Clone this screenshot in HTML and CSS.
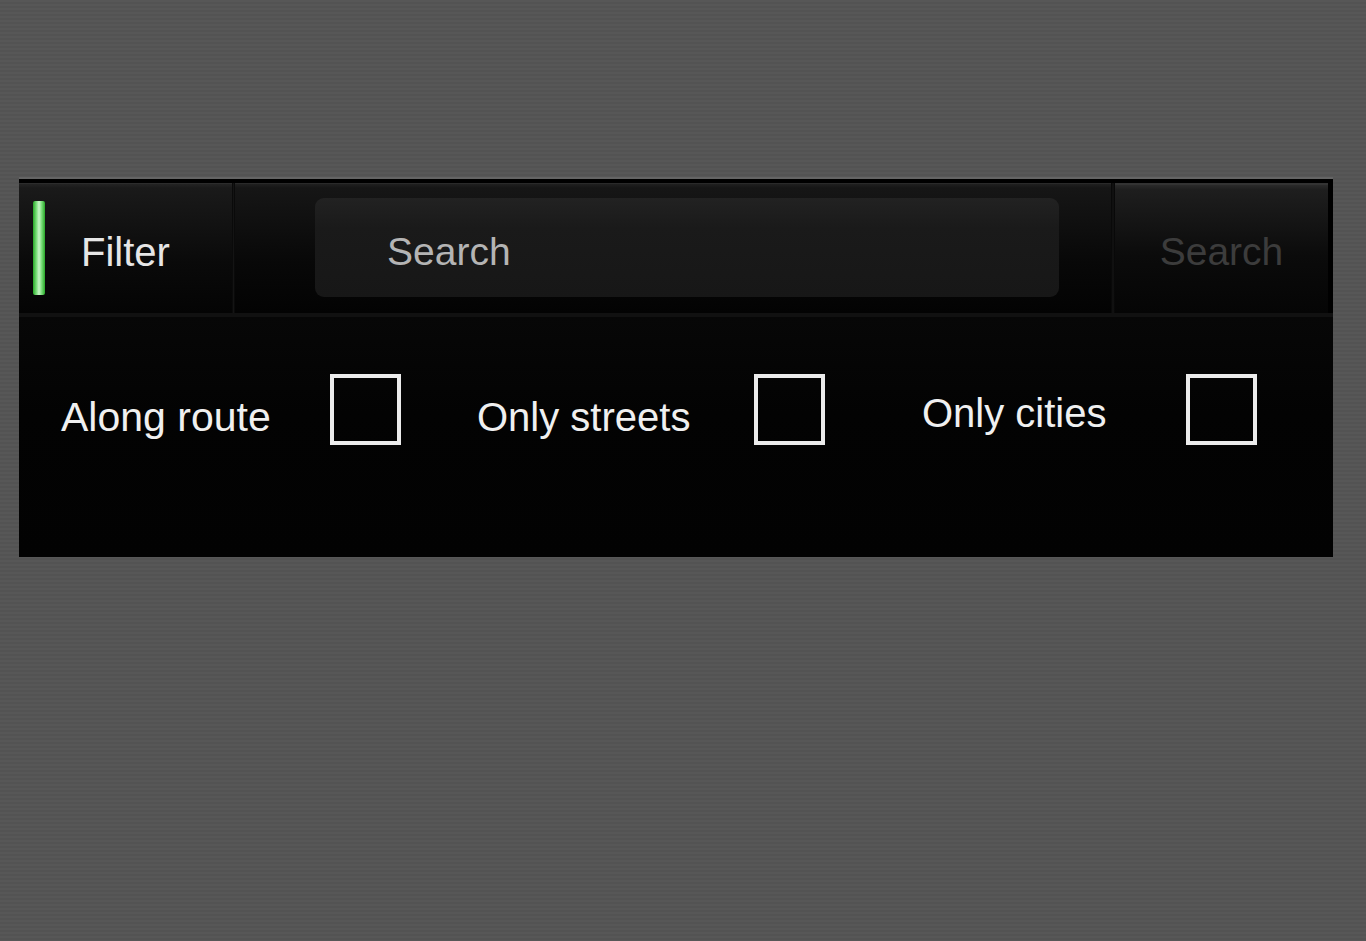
FILE: index.html
```html
<!DOCTYPE html>
<html lang="en">
<head>
    <meta charset="UTF-8">
    <meta name="viewport" content="width=device-width, initial-scale=1.0">
    <title>Search filter</title>
    <link rel="stylesheet" href="styles.css">
</head>
<body>
    <div class="panel">
        <div class="header">
            <div class="filter-cell">
                <span class="indicator"></span>
                <span class="filter-label">Filter</span>
            </div>
            <div class="sep"></div>
            <div class="search-cell">
                <div class="search-field">Search</div>
            </div>
            <div class="sep sep-wide"></div>
            <div class="search-button">Search</div>
        </div>
        <div class="options">
            <div class="option">
                <span class="option-label label-route">Along route</span>
                <span class="checkbox"></span>
            </div>
            <div class="option option-streets">
                <span class="option-label label-streets">Only streets</span>
                <span class="checkbox"></span>
            </div>
            <div class="option option-cities">
                <span class="option-label label-cities">Only cities</span>
                <span class="checkbox"></span>
            </div>
        </div>
    </div>
</body>
</html>
```

FILE: styles.css
```css
body {
    margin: 0;
    padding: 179px 0 0 19px;
    height: 941px;
    box-sizing: border-box;
    overflow: hidden;
    font-family: 'Liberation Sans', Arial, sans-serif;
    background: repeating-linear-gradient(180deg, #575757 0, #575757 2px, #535353 2px, #535353 4px);
}

.panel {
    width: 1314px;
    height: 378px;
    box-sizing: border-box;
    background: #020202;
    border-top: 4px solid #000;
    box-shadow: 0 -2px 0 #646464;
}

/* header row */
.header {
    display: flex;
    height: 134px;
    box-sizing: border-box;
    border-bottom: 4px solid #111;
    padding-right: 5px;
    background: #000;
}

.filter-cell {
    width: 213px;
    display: flex;
    align-items: center;
    padding-left: 14px;
    box-sizing: border-box;
    background: linear-gradient(180deg, #232323 0, #1a1a1a 4px, #0a0a0a 60%, #040404 100%);
    border-top: 1px solid #2c2c2c;
}

.indicator {
    width: 12px;
    height: 94px;
    margin-top: -2px;
    border-radius: 2px;
    background: linear-gradient(90deg, #27a827 0, #7fe07f 30%, #c9f5c9 50%, #7fe07f 70%, #27a827 100%);
}

.filter-label {
    margin: 6px 0 0 36px;
    font-size: 40px;
    line-height: 40px;
    color: #e6e6e6;
}

.sep {
    width: 3px;
    background: linear-gradient(90deg, #050505, #141414 50%, #050505);
}

.sep-wide {
    width: 4px;
}

.search-cell {
    flex: 1;
    padding: 14px 0 0 80px;
    box-sizing: border-box;
    background: linear-gradient(180deg, #202020 0, #161616 4px, #080808 60%, #030303 100%);
    border-top: 1px solid #2a2a2a;
}

.search-field {
    width: 744px;
    height: 99px;
    box-sizing: border-box;
    padding: 34px 0 0 72px;
    border-radius: 9px;
    background: linear-gradient(180deg, #222 0, #1a1a1a 30%, #171717 100%);
    font-size: 39px;
    line-height: 40px;
    color: #b4b4b4;
}

.search-button {
    width: 213px;
    display: flex;
    justify-content: center;
    align-items: center;
    padding-top: 6px;
    box-sizing: border-box;
    background: linear-gradient(180deg, #2a2a2a 0, #1e1e1e 5px, #0b0b0b 55%, #050505 100%);
    border-top: 2px solid #333;
    font-size: 39px;
    line-height: 40px;
    color: #3c3c3c;
}

/* option row */
.options {
    display: flex;
    height: 240px;
    box-sizing: border-box;
    padding: 57px 0 0 42px;
    background: linear-gradient(180deg, #070707 0, #030303 40%, #020202 100%);
}

.option {
    display: flex;
    align-items: flex-start;
}

.option-streets {
    margin-left: 76px;
}

.option-cities {
    margin-left: 97px;
}

.option-label {
    margin-top: 23px;
    font-size: 41px;
    line-height: 40px;
    color: #f0f0f0;
    white-space: nowrap;
}

.label-route {
    width: 269px;
}

.label-streets {
    width: 277px;
    font-size: 40px;
}

.label-cities {
    width: 264px;
    margin-top: 19px;
    font-size: 40px;
}

.checkbox {
    width: 71px;
    height: 71px;
    box-sizing: border-box;
    border: 4px solid #ececec;
}
```
